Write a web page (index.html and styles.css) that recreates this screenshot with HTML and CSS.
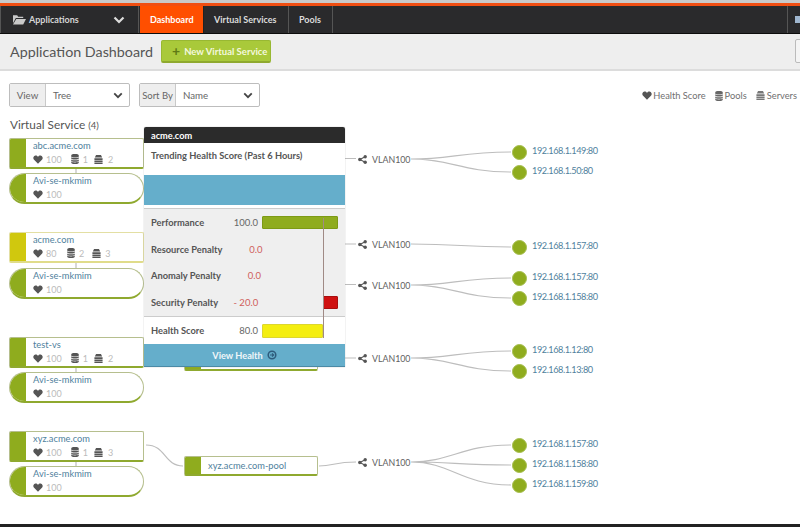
FILE: index.html
```html
<!DOCTYPE html>
<html lang="en">
<head>
<meta charset="utf-8">
<title>Application Dashboard</title>
<link rel="stylesheet" href="styles.css">
</head>
<body>
<svg class="defs" width="0" height="0" aria-hidden="true">
  <symbol id="heart" viewBox="0 0 12 11"><path d="M6 10.6 1.2 5.900C-.4 4.300.2 1.600 2.200.9 3.700.4 5.100 1 6 2.300 6.900 1 8.300.4 9.800.9c2 .7 2.600 3.400 1 5z"/></symbol>
  <symbol id="pool" viewBox="0 0 9 12"><path d="M0 1.500C0 .5 2 0 4.500 0S9 .5 9 1.500v1.400C9 3.800 7 4.200 4.500 4.200S0 3.800 0 2.900zM0 3.900c1 .7 2.700 1 4.500 1s3.500-.3 4.500-1v1.500c0 .9-2 1.300-4.500 1.300S0 6.300 0 5.400zM0 6.500c1 .7 2.700 1 4.500 1s3.500-.3 4.500-1V8c0 .9-2 1.300-4.500 1.300S0 8.900 0 8zM0 9.100c1 .7 2.700 1 4.500 1s3.500-.3 4.500-1v1.400c0 1-2 1.500-4.500 1.500S0 11.500 0 10.500z"/></symbol>
  <symbol id="server" viewBox="0 0 11 11"><path d="M2.500 0h6L10 3.200H1zM.5 4H10.500v2H.5zM.5 6.600H10.500v2H.5zM.5 9.200H10.500V11H.5z"/></symbol>
  <symbol id="share" viewBox="0 0 10 10"><path d="M2 5 8 2M2 5l6 3" stroke="currentColor" stroke-width="1.200" fill="none"/><circle cx="2" cy="5" r="1.900"/><circle cx="8" cy="2" r="1.900"/><circle cx="8" cy="8" r="1.900"/></symbol>
  <symbol id="chev" viewBox="0 0 12 8"><path d="M1.500 1.500 6 6l4.500-4.500" fill="none" stroke="currentColor" stroke-width="2.200"/></symbol>
</svg>

<header class="topbar">
  <div class="app-select">
    <svg class="folder" viewBox="0 0 14 11"><path d="M0 1h4.500l1 1.500H11V4H3L0 9.500zM3.500 5H14l-3 6H0z"/></svg>
    <span class="app-label">Applications</span>
    <svg class="app-chev"><use href="#chev"/></svg>
  </div>
  <nav class="tabs">
    <a class="tab active">Dashboard</a>
    <a class="tab vs-tab">Virtual Services</a>
    <a class="tab pools-tab">Pools</a>
  </nav>
  <div class="top-right"><span class="top-stub"></span></div>
</header>

<section class="subbar">
  <h1 class="page-title">Application Dashboard</h1>
  <button class="new-btn"><span class="plus">+</span>New Virtual Service</button>
  <span class="sub-stub"></span>
</section>

<main class="content">
  <div class="toolbar">
    <div class="picker view-picker"><span class="picker-label">View</span><span class="picker-value">Tree<svg class="picker-chev"><use href="#chev"/></svg></span></div>
    <div class="picker sort-picker"><span class="picker-label">Sort By</span><span class="picker-value">Name<svg class="picker-chev"><use href="#chev"/></svg></span></div>
    <div class="legend">
      <span class="legend-item"><svg class="lg-heart"><use href="#heart"/></svg>Health Score</span>
      <span class="legend-item"><svg class="lg-pool"><use href="#pool"/></svg>Pools</span>
      <span class="legend-item"><svg class="lg-server"><use href="#server"/></svg>Servers</span>
    </div>
  </div>
  <h2 class="section-title">Virtual Service <small>(4)</small></h2>
</main>

<div class="canvas">
  <svg class="links" width="800" height="527" viewBox="0 0 800 527">
    <g fill="none" stroke="#bdbdbd" stroke-width="1.200">
      <path d="M76 168v6M76 262v6M76 367v6M76 461v7"/>
      <path d="M345 158.500h11M345 244h11M345 284.500h11M345 358h11"/>
      <path d="M411 159c40 0 50-7 100-7M411 159c40 0 50 13 100 13"/>
      <path d="M411 244c50 0 50 3 100 3M411 285c40 0 50-7 100-7M411 285c40 0 50 13 100 13"/>
      <path d="M411 358c40 0 50-7 100-7M411 358c40 0 50 13 100 13"/>
      <path d="M411 462c40 0 50-17 100-17M411 462c40 0 50 3 100 3M411 462c40 0 50 23 100 23"/>
      <path d="M146 445c20 0 18 21 37 21M319 466c15 0 15-4 37-4"/>
    </g>
  </svg>

  <article class="node vs n1"><span class="bar"></span><div class="nb"><a class="name">abc.acme.com</a><p class="stats"><svg class="i-heart"><use href="#heart"/></svg><b>100</b><svg class="i-pool"><use href="#pool"/></svg><b>1</b><svg class="i-server"><use href="#server"/></svg><b>2</b></p></div></article>
  <article class="node se n2"><span class="bar"></span><div class="nb"><a class="name">Avi-se-mkmim</a><p class="stats"><svg class="i-heart"><use href="#heart"/></svg><b>100</b></p></div></article>

  <article class="node vs warn n3"><span class="bar"></span><div class="nb"><a class="name">acme.com</a><p class="stats"><svg class="i-heart"><use href="#heart"/></svg><b class="w80">80</b><svg class="i-pool"><use href="#pool"/></svg><b>2</b><svg class="i-server"><use href="#server"/></svg><b>3</b></p></div></article>
  <article class="node se n4"><span class="bar"></span><div class="nb"><a class="name">Avi-se-mkmim</a><p class="stats"><svg class="i-heart"><use href="#heart"/></svg><b>100</b></p></div></article>

  <article class="node vs n5"><span class="bar"></span><div class="nb"><a class="name">test-vs</a><p class="stats"><svg class="i-heart"><use href="#heart"/></svg><b>100</b><svg class="i-pool"><use href="#pool"/></svg><b>1</b><svg class="i-server"><use href="#server"/></svg><b>2</b></p></div></article>
  <article class="node se n6"><span class="bar"></span><div class="nb"><a class="name">Avi-se-mkmim</a><p class="stats"><svg class="i-heart"><use href="#heart"/></svg><b>100</b></p></div></article>

  <article class="node vs n7"><span class="bar"></span><div class="nb"><a class="name">xyz.acme.com</a><p class="stats"><svg class="i-heart"><use href="#heart"/></svg><b>100</b><svg class="i-pool"><use href="#pool"/></svg><b>1</b><svg class="i-server"><use href="#server"/></svg><b>3</b></p></div></article>
  <article class="node se n8"><span class="bar"></span><div class="nb"><a class="name">Avi-se-mkmim</a><p class="stats"><svg class="i-heart"><use href="#heart"/></svg><b>100</b></p></div></article>

  <article class="node pool p-hidden"><span class="bar"></span></article>
  <article class="node pool p4"><span class="bar"></span><div class="nb"><a class="name">xyz.acme.com-pool</a></div></article>

  <div class="vlan v1"><svg class="share"><use href="#share"/></svg>VLAN100</div>
  <div class="vlan v2"><svg class="share"><use href="#share"/></svg>VLAN100</div>
  <div class="vlan v3"><svg class="share"><use href="#share"/></svg>VLAN100</div>
  <div class="vlan v4"><svg class="share"><use href="#share"/></svg>VLAN100</div>
  <div class="vlan v5"><svg class="share"><use href="#share"/></svg>VLAN100</div>

  <div class="server s1"><i></i><a>192.168.1.149:80</a></div>
  <div class="server s2"><i></i><a>192.168.1.50:80</a></div>
  <div class="server s3"><i></i><a>192.168.1.157:80</a></div>
  <div class="server s4"><i></i><a>192.168.1.157:80</a></div>
  <div class="server s5"><i></i><a>192.168.1.158:80</a></div>
  <div class="server s6"><i></i><a>192.168.1.12:80</a></div>
  <div class="server s7"><i></i><a>192.168.1.13:80</a></div>
  <div class="server s8"><i></i><a>192.168.1.157:80</a></div>
  <div class="server s9"><i></i><a>192.168.1.158:80</a></div>
  <div class="server s10"><i></i><a>192.168.1.159:80</a></div>

  <aside class="popup">
    <div class="pop-head">acme.com</div>
    <div class="pop-trend">Trending Health Score (Past 6 Hours)</div>
    <div class="pop-chart"></div>
    <div class="pop-rows">
      <div class="pop-row"><span class="r-label">Performance</span><span class="r-val">100.0</span><span class="r-bar green"></span></div>
      <div class="pop-row"><span class="r-label">Resource Penalty</span><span class="r-val red">0.0</span></div>
      <div class="pop-row"><span class="r-label">Anomaly Penalty</span><span class="r-val red">0.0</span></div>
      <div class="pop-row"><span class="r-label">Security Penalty</span><span class="r-val red">- 20.0</span><span class="r-bar penalty"></span></div>
      <span class="marker"></span>
    </div>
    <div class="pop-score"><span class="r-label">Health Score</span><span class="r-val">80.0</span><span class="r-bar yellow"></span></div>
    <div class="pop-foot">View Health<svg class="arrow" viewBox="0 0 10 10"><circle cx="5" cy="5" r="3.800" fill="none" stroke="currentColor" stroke-width="1.500"/><path d="M3 5h3.500M5 3.300 6.800 5 5 6.700" fill="none" stroke="currentColor" stroke-width="1.100"/></svg></div>
  </aside>
</div>
<div class="window-edge"></div>
</body>
</html>
```
FILE: styles.css
```css
* { box-sizing: border-box; }
html, body { margin: 0; padding: 0; }
body {
  width: 800px; height: 527px; overflow: hidden; position: relative;
  font-family: Lato, "Liberation Sans", sans-serif; background: #fff; color: #555;
  border-top: 3px solid #c9c9c9;
}
.defs { position: absolute; }
svg { fill: currentColor; }

.topbar {
  height: 31px; background: #2a2a2c; border-top: 3px solid #f04e12; border-bottom: 1px solid #0c0c0c;
  display: flex; color: #ddd; font-size: 9px; font-weight: 700;
}
.app-select { width: 139px; display: flex; align-items: center; padding-left: 12px; border-right: 1px solid #555; border-left: 1px solid #555; }
.folder { width: 13px; height: 11px; fill: #c9c9c9; margin-right: 3px; }
.app-label { flex: 1; color: #d5d5d5; }
.app-chev { width: 12px; height: 8px; margin-right: 13px; color: #ddd; }
.tabs { display: flex; }
.tab { display: flex; align-items: center; padding: 0 0 0 10px; border-right: 1px solid #555; color: #dcdcdc; white-space: nowrap; }
.tab.active { background: #ff4f00; color: #fff; width: 64px; border-right: 1px solid #222; margin-left: 1px; }
.vs-tab { width: 85px; }
.pools-tab { width: 44px; }
.top-right { margin-left: auto; width: 13px; border-left: 1px solid #555; display: flex; align-items: center; padding-left: 7px; }
.top-stub { width: 5px; height: 7px; background: #9fb6cf; flex: none; }

.subbar {
  height: 37px; background: #eee; border-bottom: 2px solid #dcdcdc; display: flex; align-items: center;
  padding: 0 0 0 10px; position: relative;
}
.page-title { margin: 0; font-size: 14.300px; font-weight: 400; color: #555; width: 151px; white-space: nowrap; }
.new-btn {
  width: 110px; height: 23px; margin: 0; padding: 0 0 0 10px; display: flex; align-items: center;
  background: #a9c93a; border: 1px solid #98b832; border-bottom: 2px solid #8fa92f; border-radius: 2px;
  font: 700 9.500px Lato, sans-serif; color: #f4f8df; white-space: nowrap;
}
.plus { font-size: 14px; line-height: 1; margin-right: 4px; color: #5f7a14; }
.sub-stub { position: absolute; right: -9px; top: 5px; height: 24px; width: 14px; border: 1px solid #bbb; border-radius: 2px; background: #f4f4f4; }

.content { padding: 12px 0 0 9px; }
.toolbar { display: flex; align-items: flex-start; height: 24px; }
.picker { display: flex; height: 24px; border: 1px solid #bdbdbd; border-radius: 2px; font-size: 9.700px; background: #fff; }
.view-picker { width: 121px; margin-right: 9px; }
.sort-picker { width: 121px; }
.picker-label { background: #eee; border-right: 1px solid #c9c9c9; display: flex; align-items: center; justify-content: center; color: #666; width: 36px; flex: none; }
.sort-picker .picker-label { font-size: 9.500px; white-space: nowrap; }
.picker-value { flex: 1; display: flex; align-items: center; justify-content: space-between; padding: 0 6px 0 7px; color: #666; }
.picker-chev { width: 10px; height: 7px; color: #444; }
.legend { margin-left: auto; margin-right: 3px; display: flex; gap: 9px; font-size: 9.300px; color: #707070; padding-top: 7px; }
.legend-item { display: flex; align-items: center; white-space: nowrap; }
.lg-heart { width: 10px; height: 9px; margin-right: 1px; color: #555; }
.lg-pool { width: 8px; height: 10px; margin-right: 2px; color: #666; }
.lg-server { width: 9px; height: 9px; margin-right: 2px; color: #777; }
.section-title { margin: 10px 0 0 1px; font-size: 11.800px; font-weight: 400; color: #555; }
.section-title small { font-size: 9.500px; }

.canvas { position: absolute; left: 0; top: -3px; width: 800px; height: 527px; pointer-events: none; }
.links { position: absolute; left: 0; top: 0; }

.node { position: absolute; left: 9px; width: 135px; height: 31px; display: flex; background: #fff; overflow: hidden; border: 1px solid #b6bf8e; border-bottom: 2px solid #8fa92f; border-radius: 2px; }
.node .bar { width: 16px; flex: none; background: #8fac1e; }
.nb { padding: 0 0 0 7px; flex: 1; }
.name { display: block; color: #4f7f9d; font-size: 9.300px; line-height: 13px; white-space: nowrap; }
.stats { margin: 2px 0 0; display: flex; align-items: center; height: 10px; font-size: 9px; color: #bbb; }
.stats b { font-weight: 400; }
.stats svg { color: #555; flex: none; }
.i-heart { width: 10px; height: 9px; margin-right: 3px; }
.i-pool { width: 8px; height: 10px; margin: 0 4px 0 9px; }
.i-server { width: 9px; height: 9px; margin: 0 5px 0 6px; }
.w80 { min-width: 12px; }
.warn .i-server { margin: 0 4px 0 8px; }
.vs.warn { border-color: #e3dfa3; border-bottom: 2px solid #e0dc8a; }
.warn .bar { background: #d0c80e; }
.se { border-radius: 16px; }
.n1 { top: 138px; } .n2 { top: 173px; }
.n3 { top: 232px; } .n4 { top: 268px; }
.n5 { top: 337px; } .n6 { top: 372px; }
.n7 { top: 431px; } .n8 { top: 466px; }

.pool { left: 184px; width: 134px; height: 20px; }
.pool .nb { padding: 2px 0 0 7px; }
.p-hidden { top: 352px; height: 19px; }
.p4 { top: 456px; }

.vlan { position: absolute; left: 358px; display: flex; align-items: center; height: 14px; font-size: 8.800px; color: #606060; }
.share { width: 9px; height: 9px; margin-right: 5px; color: #555; flex: none; }
.v1 { top: 152px; } .v2 { top: 237px; } .v3 { top: 278px; } .v4 { top: 351px; } .v5 { top: 455px; }

.server { position: absolute; left: 512px; display: flex; align-items: center; height: 15px; font-size: 9.200px; letter-spacing: -.45px; color: #4f7f9d; }
.server i { width: 15px; height: 15px; border-radius: 50%; background: #8fac1e; border: 1px solid #a5bd4c; margin-right: 5px; flex: none; }
.server a { position: relative; top: -2px; }
.s1 { top: 145px; } .s2 { top: 165px; } .s3 { top: 240px; } .s4 { top: 271px; } .s5 { top: 291px; }
.s6 { top: 344px; } .s7 { top: 364px; } .s8 { top: 438px; } .s9 { top: 458px; } .s10 { top: 478px; }

.popup { position: absolute; left: 144px; top: 127px; width: 201px; height: 240px; background: #fff; box-shadow: 0 0 1px #888; font-size: 9.300px; font-weight: 700; color: #555; border-radius: 2px 2px 0 0; display: flex; flex-direction: column; }
.pop-head { height: 16px; background: #2b2b2b; color: #fff; font-size: 9.200px; padding: 3px 0 0 7px; border-radius: 2px 2px 0 0; flex: none; }
.pop-trend { height: 32px; padding: 7px 0 0 7px; white-space: nowrap; flex: none; }
.pop-chart { height: 30px; background: #65aecb; flex: none; }
.pop-rows { position: relative; margin-top: 3px; height: 109px; background: #efefef; border-top: 1px solid #ccc; border-bottom: 1px solid #ccc; padding: 0 0 0 7px; flex: none; }
.pop-row { height: 26.700px; display: flex; align-items: center; position: relative; }
.r-label { flex: 0 0 67px; white-space: nowrap; }
.r-val { flex: 0 0 40px; font-weight: 400; font-size: 9.500px; color: #666; text-align: right; white-space: nowrap; }
.red { color: #d0605c; }
.r-bar { position: absolute; border-radius: 1px; }
.green { left: 111px; width: 76px; height: 13px; background: #8fac1e; border: 1px solid #7d9a15; }
.penalty { left: 172px; width: 15px; height: 13px; background: #cf1111; border: 1px solid #a80f0f; }
.marker { position: absolute; z-index: 2; left: 179px; top: 9px; width: 1px; height: 120px; background: #a08a85; }
.pop-score { position: relative; height: 27px; padding-left: 7px; display: flex; align-items: center; flex: none; background: #fff; }
.yellow { left: 118px; width: 61px; height: 14px; background: #f4ee10; border: 1px solid #dcd630; }
.pop-foot { height: 23px; margin-top: auto; background: #65aecb; color: #f1f6f9; font-size: 9.200px; display: flex; align-items: center; justify-content: center; border-bottom: 1px solid #4b8aa6; flex: none; }
.arrow { width: 10px; height: 10px; margin-left: 4px; color: #2e5c7c; fill: none; }

.window-edge { position: absolute; left: 0; right: 0; bottom: 0; height: 3px; background: #222; }
```
